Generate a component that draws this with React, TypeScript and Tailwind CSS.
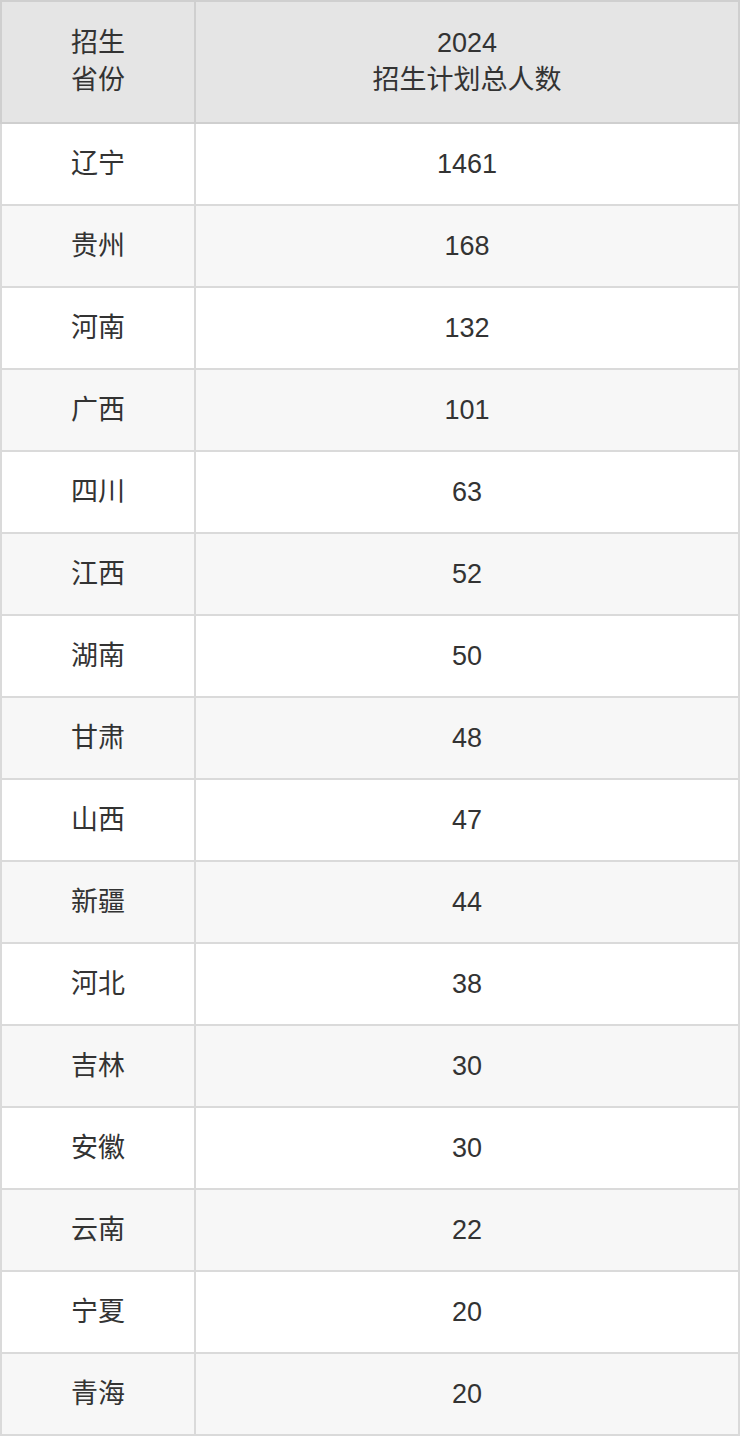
const rows: [string, string][] = [
  ["辽宁", "1461"],
  ["贵州", "168"],
  ["河南", "132"],
  ["广西", "101"],
  ["四川", "63"],
  ["江西", "52"],
  ["湖南", "50"],
  ["甘肃", "48"],
  ["山西", "47"],
  ["新疆", "44"],
  ["河北", "38"],
  ["吉林", "30"],
  ["安徽", "30"],
  ["云南", "22"],
  ["宁夏", "20"],
  ["青海", "20"],
];

export default function App() {
  return (
    <div
      className="w-[740px] bg-white text-[#333333]"
      style={{ fontFamily: '"Liberation Sans", "Noto Sans CJK SC", sans-serif' }}
    >
      <table className="w-[740px] border-collapse text-center text-[27px]">
        <thead>
          <tr className="h-[122px] bg-[#e5e5e5] leading-[37px]">
            <th className="w-[194px] border-2 border-[#cfcfcf] font-normal">
              招生
              <br />
              省份
            </th>
            <th className="border-2 border-[#cfcfcf] font-normal">
              2024
              <br />
              招生计划总人数
            </th>
          </tr>
        </thead>
        <tbody>
          {rows.map(([prov, num], i) => (
            <tr key={prov + i} className={"h-[82px] " + (i % 2 === 1 ? "bg-[#f7f7f7]" : "bg-white")}>
              <td className="border-2 border-[#dadada]">{prov}</td>
              <td className="border-2 border-[#dadada]">{num}</td>
            </tr>
          ))}
        </tbody>
      </table>
    </div>
  );
}
